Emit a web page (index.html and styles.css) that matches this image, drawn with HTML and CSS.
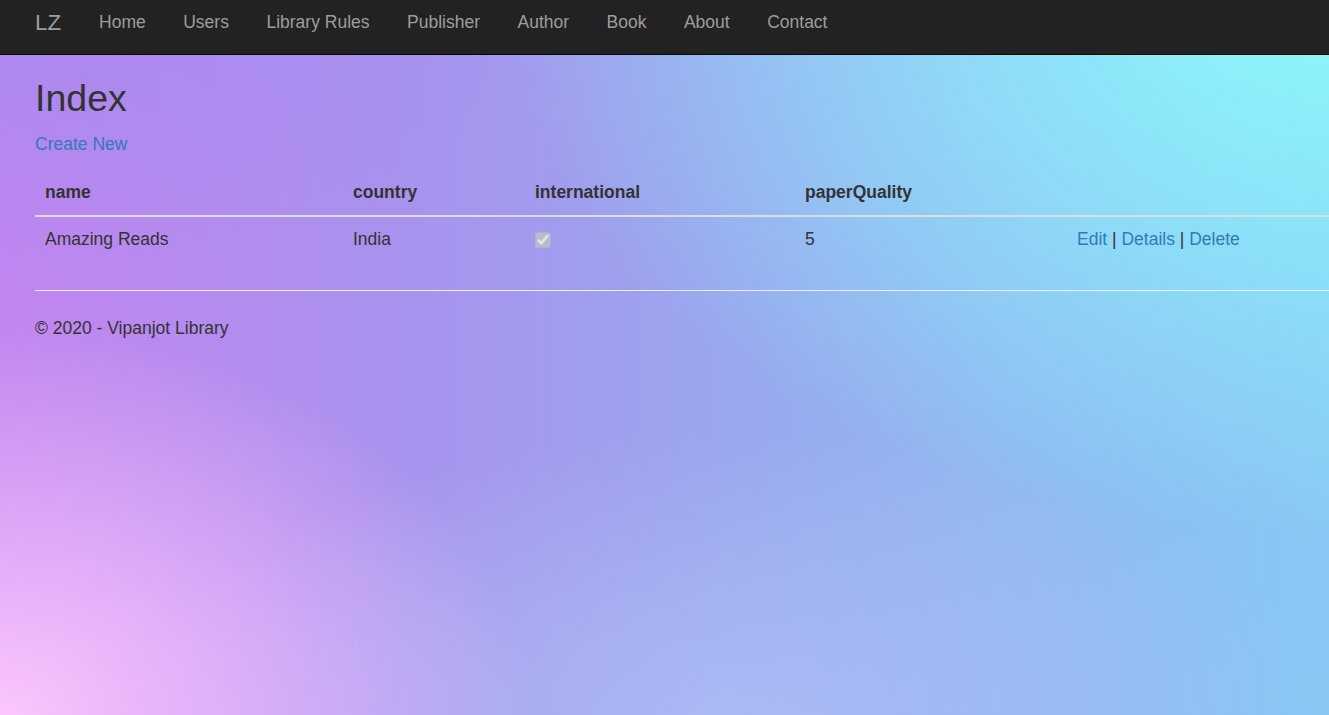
FILE: index.html
```html
<!DOCTYPE html>
<html lang="en">
<head>
<meta charset="utf-8">
<title>Index - Vipanjot Library</title>
<link rel="stylesheet" href="styles.css">
</head>
<body>
<nav class="navbar">
  <a class="brand" href="#">LZ</a>
  <ul class="nav">
    <li><a href="#">Home</a></li>
    <li><a href="#">Users</a></li>
    <li><a href="#">Library Rules</a></li>
    <li><a href="#">Publisher</a></li>
    <li><a href="#">Author</a></li>
    <li><a href="#">Book</a></li>
    <li><a href="#">About</a></li>
    <li><a href="#">Contact</a></li>
  </ul>
</nav>
<main class="body-content">
  <h2 class="title">Index</h2>
  <p class="create"><a href="#">Create New</a></p>
  <table class="table">
    <thead>
      <tr>
        <th class="c-name">name</th>
        <th class="c-country">country</th>
        <th class="c-intl">international</th>
        <th class="c-quality">paperQuality</th>
        <th></th>
      </tr>
    </thead>
    <tbody>
      <tr>
        <td>Amazing Reads</td>
        <td>India</td>
        <td><input class="check" type="checkbox" checked disabled></td>
        <td>5</td>
        <td><a href="#">Edit</a> | <a href="#">Details</a> | <a href="#">Delete</a></td>
      </tr>
    </tbody>
  </table>
  <hr class="rule">
  <footer class="footer">
    <p>&copy; 2020 - Vipanjot Library</p>
  </footer>
</main>
</body>
</html>
```

FILE: styles.css
```css
html {
  min-height: 100%;
  background-color: #a49cee;
  background-image:
    radial-gradient(ellipse 62% 75% at 100% 0%, rgba(142, 250, 252, 0.95), rgba(142, 250, 252, 0) 100%),
    radial-gradient(ellipse 40% 55% at 0% 100%, rgba(252, 198, 253, 1), rgba(252, 198, 253, 0) 100%),
    radial-gradient(ellipse 40% 40% at 0% 0%, rgba(160, 138, 238, 0.8), rgba(160, 138, 238, 0) 100%),
    radial-gradient(ellipse 45% 40% at 55% 100%, rgba(175, 190, 245, 0.8), rgba(175, 190, 245, 0) 100%),
    linear-gradient(90deg, #c285f0 0%, #a892ee 30%, #9ca2ee 50%, #90b8f1 75%, #88c8f3 100%);
  background-attachment: fixed;
}

body {
  margin: 0;
  font-family: "Liberation Sans", Arial, sans-serif;
  font-size: 17.5px;
  line-height: 25px;
  color: #333;
}

a {
  color: #337ab7;
  text-decoration: none;
}

.navbar {
  display: flex;
  align-items: flex-start;
  height: 55px;
  background: #222;
  border-bottom: 1px solid #080808;
  box-sizing: border-box;
  padding: 10px 0 0 16px;
}

.brand {
  color: #9d9d9d;
  font-size: 22.5px;
  padding: 0 19px;
  line-height: 25px;
}

.nav {
  display: flex;
  list-style: none;
  margin: 0;
  padding: 0;
}

.nav a {
  display: block;
  color: #9d9d9d;
  padding: 0 18.75px;
  line-height: 25px;
}

.body-content {
  padding-left: 35px;
}

.title {
  font-size: 37.5px;
  font-weight: 500;
  line-height: 41px;
  margin: 23px 0 13px;
  color: #333;
}

.create {
  margin: 0 0 13px;
}

.table {
  width: 100%;
  border-collapse: collapse;
  margin-bottom: 28px;
}

.table th,
.table td {
  text-align: left;
  padding: 10px;
  line-height: 25px;
  vertical-align: top;
}

.table th {
  font-weight: bold;
  border-bottom: 2px solid #ddd;
}

.c-name { width: 288px; }
.c-country { width: 162px; }
.c-intl { width: 250px; }
.c-quality { width: 252px; }

.check {
  margin: 5px 0 0;
  width: 16px;
  height: 16px;
  vertical-align: top;
}

.rule {
  border: 0;
  border-top: 1px solid #eee;
  margin: 0 0 25px;
}

.footer p {
  margin: 0 0 12px;
}
```
